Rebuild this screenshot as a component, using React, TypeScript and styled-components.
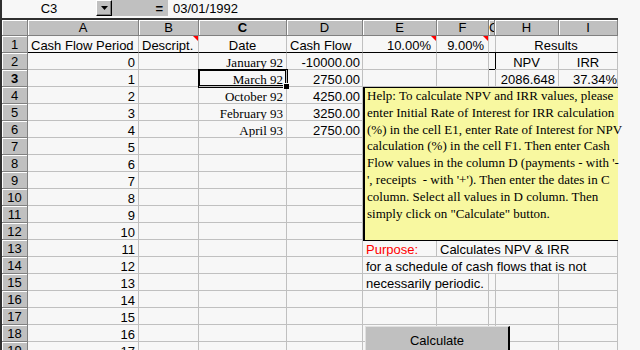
import React from 'react'
import styled, { createGlobalStyle, css } from 'styled-components'

const GlobalStyle = createGlobalStyle`
  html, body {
    margin: 0;
    padding: 0;
    background: #f7f7f7;
    overflow: hidden;
  }
  body {
    font-family: 'Liberation Sans', Arial, sans-serif;
    font-size: 13px;
    color: #000;
  }
`

const Window = styled.div`
  width: 640px;
  height: 350px;
  box-sizing: border-box;
  border-left: 2px solid #303030;
  display: flex;
  flex-direction: column;
  overflow: hidden;
`

const FormulaBar = styled.div`
  display: flex;
  align-items: flex-start;
  height: 18px;
  flex-shrink: 0;
`

const NameBox = styled.div`
  width: 94px;
  height: 16px;
  padding-top: 1px;
  box-sizing: border-box;
  line-height: 15px;
  text-align: center;
`

const DropButton = styled.div`
  width: 16px;
  height: 16px;
  box-sizing: border-box;
  background: #c0c0c0;
  border: 1px solid;
  border-color: #fff #000 #000 #fff;
  box-shadow: inset -1px -1px 0 #808080;
  display: flex;
  align-items: center;
  justify-content: center;
`

const EqualsArea = styled.div`
  width: 56px;
  height: 16px;
  padding: 1px 5px 0 0;
  box-sizing: border-box;
  background: #c0c0c0;
  text-align: right;
  font-weight: bold;
  line-height: 15px;
`

const FormulaText = styled.div`
  padding: 1px 0 0 5px;
  line-height: 15px;
`

const Sheet = styled.div`
  position: relative;
  width: 616px;
  display: grid;
  grid-template-columns: 26px 111px 60px 88px 76px 74px 52px 6px 64px 59px;
  grid-template-rows: 16px;
  grid-auto-rows: 17px;
  border-top: 2px solid #303030;
  flex-shrink: 0;
`

const HeaderCell = styled.div<{ $bold?: boolean }>`
  box-sizing: border-box;
  background: #c0c0c0;
  border-right: 1px solid #808080;
  border-bottom: 1px solid #808080;
  box-shadow: inset 1px 1px 0 #fff;
  text-align: center;
  line-height: 15px;
  overflow: hidden;
  white-space: nowrap;
  font-weight: ${(p) => (p.$bold ? 'bold' : 'normal')};
`

const RowHeader = styled(HeaderCell)`
  padding-top: 2px;
  line-height: 14px;
`

const Cell = styled.div<{
  $align?: 'left' | 'right' | 'center'
  $span?: number
  $serif?: boolean
  $red?: boolean
  $note?: boolean
  $thick?: boolean
  $corner?: boolean
  $selected?: boolean
  $pr?: number
}>`
  position: relative;
  box-sizing: border-box;
  border-right: 1px solid #c0c0c0;
  border-bottom: 1px solid ${(p) => (p.$thick ? '#000' : '#c0c0c0')};
  padding: 2px ${(p) => p.$pr ?? 3}px 0 3px;
  line-height: 15px;
  white-space: nowrap;
  overflow: hidden;
  text-align: ${(p) => p.$align ?? 'left'};
  grid-column: span ${(p) => p.$span ?? 1};
  color: ${(p) => (p.$red ? '#ff0000' : '#000')};
  font-family: ${(p) =>
    p.$serif ? "'Liberation Serif', 'Times New Roman', serif" : "'Liberation Sans', Arial, sans-serif"};
  ${(p) =>
    p.$corner &&
    css`
      border-right-color: #000;
      border-bottom-color: #000;
    `}
  ${(p) =>
    p.$note &&
    css`
      &::after {
        content: '';
        position: absolute;
        top: 0;
        right: 0;
        border-top: 5px solid #ff0000;
        border-left: 5px solid transparent;
      }
    `}
  ${(p) =>
    p.$selected &&
    css`
      overflow: visible;
      z-index: 1;
      box-shadow: 0 0 0 1px #000, inset 0 0 0 1px #000;
      &::after {
        content: '';
        position: absolute;
        right: -3px;
        bottom: -3px;
        width: 5px;
        height: 5px;
        background: #000;
        border: 1px solid #f7f7f7;
        border-width: 1px 0 0 1px;
      }
    `}
`

const HelpBox = styled.div`
  position: absolute;
  left: 361px;
  top: 67px;
  width: 255px;
  height: 154px;
  box-sizing: border-box;
  background: #f8f8a0;
  border-left: 2px solid #000;
  border-top: 1px solid #000;
  border-bottom: 1px solid #000;
  padding: 0 0 0 2px;
  font-family: 'Liberation Serif', 'Times New Roman', serif;
  font-size: 13px;
  line-height: 16.8px;
  white-space: pre;
  z-index: 2;
`

const CalcButton = styled.div`
  position: absolute;
  left: 363px;
  top: 306px;
  width: 145px;
  height: 30px;
  box-sizing: border-box;
  background: #c0c0c0;
  border-top: 1px solid #e0e0e0;
  border-left: 1px solid #e0e0e0;
  border-right: 2px solid #000;
  padding-top: 6px;
  line-height: 15px;
  text-align: center;
  z-index: 2;
`

const columns = ['A', 'B', 'C', 'D', 'E', 'F', 'G', 'H', 'I']

const dates: Record<number, [string, string]> = {
  2: ['January 92', '-10000.00'],
  3: ['March 92', '2750.00'],
  4: ['October 92', '4250.00'],
  5: ['February 93', '3250.00'],
  6: ['April 93', '2750.00'],
}

const helpText = [
  'Help: To calculate NPV and IRR values, please',
  'enter Initial Rate of Interest for IRR calculation',
  '(%) in the cell E1, enter Rate of Interest for NPV',
  'calculation (%) in the cell F1. Then enter Cash',
  "Flow values in the column D (payments - with '-",
  "', receipts  - with '+'). Then enter the dates in C",
  'column. Select all values in D column. Then',
  'simply click on "Calculate" button.',
].join('\n')

const renderRest = (n: number) => {
  if (n === 2)
    return (
      <>
        <Cell />
        <Cell />
        <Cell $corner />
        <Cell $align="center">NPV</Cell>
        <Cell $align="center">IRR</Cell>
      </>
    )
  if (n === 3)
    return (
      <>
        <Cell />
        <Cell />
        <Cell />
        <Cell $align="right">2086.648</Cell>
        <Cell $align="right" $pr={0}>37.34%</Cell>
      </>
    )
  if (n === 13)
    return (
      <>
        <Cell $red>Purpose:</Cell>
        <Cell $span={4}>Calculates NPV &amp; IRR</Cell>
      </>
    )
  if (n === 14) return <Cell $span={5}>for a schedule of cash flows that is not</Cell>
  if (n === 15)
    return (
      <>
        <Cell $span={2}>necessarily periodic.</Cell>
        <Cell />
        <Cell />
        <Cell />
      </>
    )
  return (
    <>
      <Cell />
      <Cell />
      <Cell />
      <Cell />
      <Cell />
    </>
  )
}

const DataRow: React.FC<{ n: number }> = ({ n }) => {
  const d = dates[n]
  return (
    <>
      <RowHeader $bold={n === 3}>{n}</RowHeader>
      <Cell $align="right">{n - 2}</Cell>
      <Cell />
      <Cell $align="right" $serif $selected={n === 3}>
        {d ? d[0] : ''}
      </Cell>
      <Cell $align="right" $pr={2}>
        {d ? d[1] : ''}
      </Cell>
      {renderRest(n)}
    </>
  )
}

const App: React.FC = () => {
  const rows = Array.from({ length: 18 }, (_, i) => i + 2)

  return (
    <Window>
      <GlobalStyle />
      <FormulaBar>
        <NameBox>C3</NameBox>
        <DropButton>
          <svg width="7" height="4" viewBox="0 0 7 4">
            <polygon points="0,0 7,0 3.5,4" fill="#000" />
          </svg>
        </DropButton>
        <EqualsArea>=</EqualsArea>
        <FormulaText>03/01/1992</FormulaText>
      </FormulaBar>
      <Sheet>
        <HeaderCell />
        {columns.map((c) => (
          <HeaderCell key={c} $bold={c === 'C'}>
            {c}
          </HeaderCell>
        ))}

        <RowHeader>1</RowHeader>
        <Cell $thick>Cash Flow Period</Cell>
        <Cell $thick $note>Descript.</Cell>
        <Cell $thick $align="center">Date</Cell>
        <Cell $thick>Cash Flow</Cell>
        <Cell $thick $note $align="right" $pr={5}>10.00%</Cell>
        <Cell $thick $note $align="right" $pr={4}>9.00%</Cell>
        <Cell $thick />
        <Cell $thick $span={2} $align="center">Results</Cell>

        {rows.map((n) => (
          <DataRow key={n} n={n} />
        ))}

        <HelpBox>{helpText}</HelpBox>
        <CalcButton>Calculate</CalcButton>
      </Sheet>
    </Window>
  )
}

export default App
